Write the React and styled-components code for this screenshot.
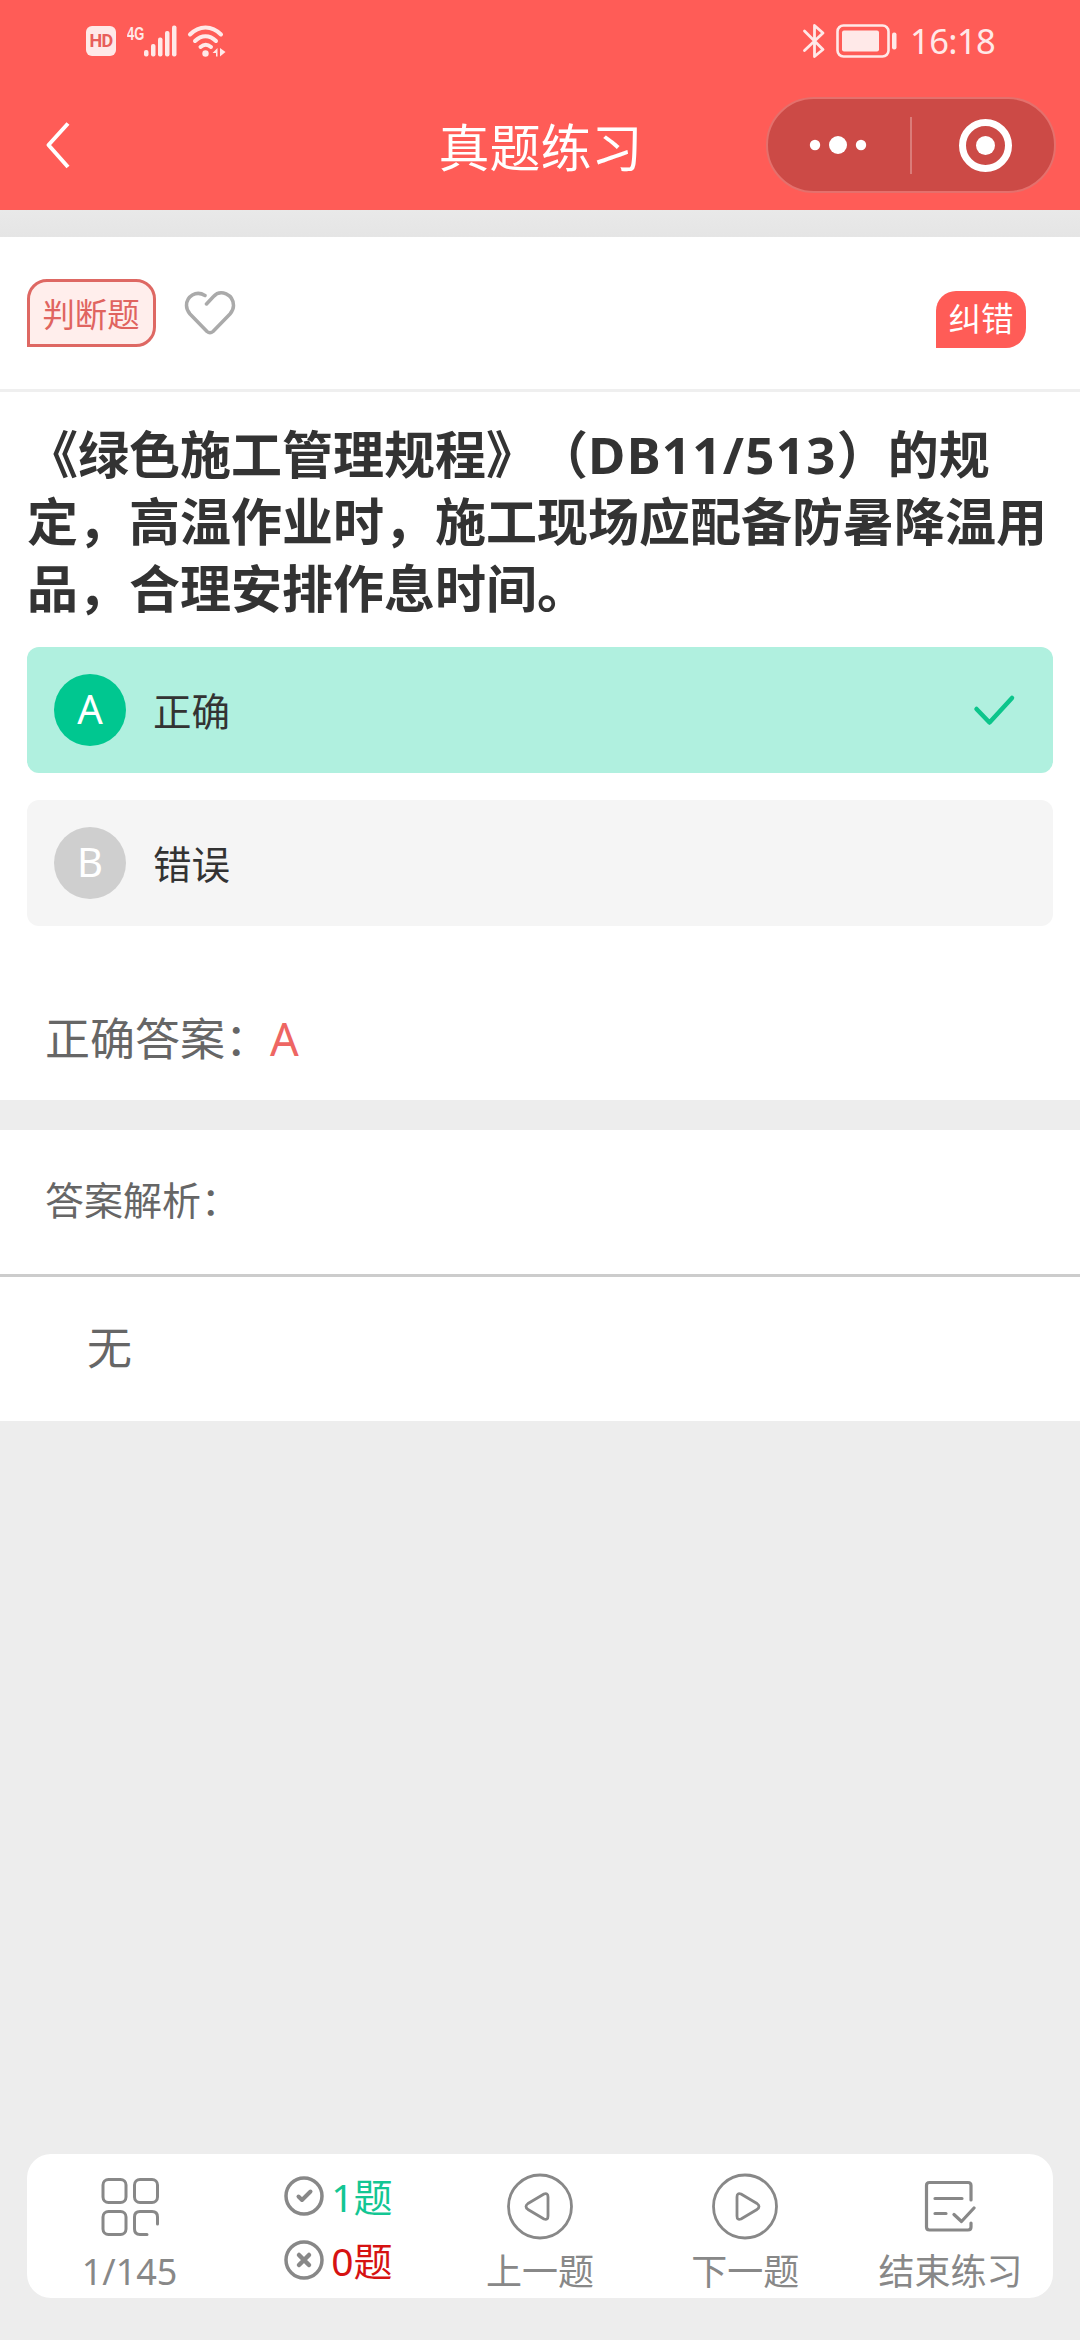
import styled, { createGlobalStyle } from 'styled-components';

const GlobalStyle = createGlobalStyle`
  * {
    box-sizing: border-box;
  }
  body {
    margin: 0;
    background: #ededed;
    font-family: 'Noto Sans', 'Noto Sans CJK SC', sans-serif;
    text-spacing-trim: space-all;
  }
`;

const Page = styled.div`
  width: 1080px;
  height: 2340px;
  display: flex;
  flex-direction: column;
  background: #ededed;
  overflow: hidden;
`;

const Header = styled.header`
  height: 210px;
  background: #ff5c57;
  color: #fff;
`;

const StatusBar = styled.div`
  height: 81px;
  padding: 0 86px;
  display: flex;
  align-items: center;
  justify-content: space-between;
  color: #ffe9e8;
`;

const StatusGroup = styled.div`
  display: flex;
  align-items: center;
  gap: ${({ $gap }) => $gap}px;
`;

const HdBadge = styled.span`
  width: 30px;
  height: 30px;
  margin-right: 2px;
  border-radius: 6px;
  background: #ffe9e8;
  color: #e85f5b;
  font: 700 18px/30px Roboto, sans-serif;
  letter-spacing: -0.8px;
  text-align: center;
`;

const NetworkType = styled.span`
  width: 17px;
  height: 32px;
  margin-right: -9px;
  font: 700 19px/18px 'Liberation Sans', sans-serif;

  span {
    display: block;
    transform: scaleX(0.68);
    transform-origin: left;
  }
`;

const Clock = styled.span`
  width: 84px;
  margin-left: 2px;
  font-size: 34.5px;
  line-height: 40px;
  letter-spacing: -0.6px;
  white-space: nowrap;
`;

const NavBar = styled.div`
  height: 129px;
  display: grid;
  grid-template-columns: 1fr 204px 1fr;
  align-items: center;
  padding: 0 24px 1px 43px;
`;

const BackButton = styled.button`
  width: 32px;
  height: 52px;
  padding: 0;
  border: none;
  background: none;
`;

const Title = styled.h1`
  margin: 3px 0 0 -9px;
  font-size: 51px;
  line-height: 60px;
  font-weight: 400;
  white-space: nowrap;
`;

const Capsule = styled.div`
  width: 290px;
  height: 96px;
  justify-self: end;
  display: flex;
  align-items: center;
  border: 2px solid #e5706c;
  border-radius: 48px;
  background: #cc4a46;
`;

const Band = styled.div`
  height: 27px;
  background: linear-gradient(#e9e9e9, #e5e5e5);
`;

const Card = styled.section`
  background: #fff;
`;

const TagRow = styled.div`
  height: 155px;
  padding: 42px 54px 0 27px;
  display: flex;
  align-items: flex-start;
  border-bottom: 3px solid #efefef;
`;

const TypeTag = styled.span`
  width: 129px;
  height: 68px;
  padding-right: 1px;
  border: 3px solid #de6863;
  border-radius: 20px 20px 20px 0;
  background: #ffeeec;
  color: #e0645f;
  font-size: 32.4px;
  line-height: 64px;
  text-align: center;
`;

const LikeButton = styled.button`
  height: 46px;
  margin: 11px auto 0 28px;
  padding: 0;
  border: none;
  background: none;
`;

const ReportButton = styled.button`
  width: 90px;
  height: 57px;
  margin-top: 12px;
  padding: 0 0 2px;
  border: none;
  border-radius: 20px 20px 20px 0;
  background: #ff5c57;
  color: #fff;
  font: inherit;
  font-size: 32.5px;
  line-height: 52px;
`;

const Question = styled.h2`
  margin: 0;
  padding: 29px 27px 25px;
  color: #333;
  font-size: 51px;
  line-height: 67px;
  font-weight: 700;
`;

const Code = styled.span`
  letter-spacing: 1.3px;
`;

const Options = styled.div`
  padding: 0 27px;
  display: flex;
  flex-direction: column;
  gap: 27px;
`;

const Option = styled.div`
  height: 126px;
  padding: 0 36px 0 27px;
  display: flex;
  align-items: center;
  border-radius: 12px;
  background: ${({ $correct }) => ($correct ? '#b0f0df' : '#f5f5f5')};
  color: #333;
`;

const OptionLetter = styled.span`
  width: 72px;
  height: 72px;
  border-radius: 50%;
  background: ${({ $correct }) => ($correct ? '#00c790' : '#cfcfcf')};
  color: #fff;
  font-size: 40px;
  line-height: 70px;
  text-align: center;
`;

const OptionText = styled.span`
  flex: 1;
  margin-left: 27px;
  padding-top: 2px;
  font-size: 38.5px;
  line-height: 60px;
`;

const Answer = styled.p`
  margin: 0;
  height: 174px;
  padding: 83px 45px 0;
  color: #666;
  font-size: 45px;
  line-height: 60px;

  strong {
    color: #ee6663;
    font-weight: 400;
  }
`;

const AnalysisCard = styled(Card)`
  margin-top: 30px;
`;

const AnalysisTitle = styled.h3`
  margin: 0;
  height: 147px;
  padding: 0 45px;
  border-bottom: 3px solid #ccc;
  color: #666;
  font-size: 39px;
  line-height: 140px;
  font-weight: 400;
`;

const AnalysisText = styled.p`
  margin: 0;
  height: 144px;
  padding: 0 87px;
  color: #666;
  font-size: 45px;
  line-height: 142px;
`;

const Toolbar = styled.nav`
  height: 144px;
  margin: auto 27px 42px;
  display: grid;
  grid-template-columns: repeat(5, 1fr);
  border-radius: 24px;
  background: #fff;
  color: #888;
`;

const ToolButton = styled.button`
  height: 144px;
  padding: 18px 0 0;
  display: flex;
  flex-direction: column;
  align-items: center;
  border: none;
  background: none;
  color: inherit;
  font: inherit;
  font-size: 36px;
  line-height: 40px;
  white-space: nowrap;

  svg {
    flex: none;
    margin-bottom: 10px;
  }
`;

const Score = styled.div`
  padding: 12px 0 0 51px;
`;

const ScoreRow = styled.div`
  height: 64px;
  display: flex;
  align-items: flex-start;
  gap: 6px;
  color: ${({ $color }) => $color};
  font-size: 39px;
  line-height: 62px;
  white-space: nowrap;

  svg {
    margin-top: 9px;
    color: #888;
  }
`;

const SignalIcon = () => (
  <svg width="34" height="32" fill="currentColor">
    <rect x="0" y="25" width="4.5" height="6.5" rx="2" />
    <rect x="7" y="19" width="4.5" height="12.5" rx="2" />
    <rect x="14" y="12.5" width="4.5" height="19" rx="2" />
    <rect x="21" y="6" width="4.5" height="25.5" rx="2" />
    <rect x="28" y="0.5" width="4.5" height="31" rx="2" />
  </svg>
);

const WifiIcon = () => (
  <svg width="40" height="34" fill="none" stroke="currentColor" strokeWidth="4" strokeLinecap="round">
    <path d="M3 10.5C12 1 25 1 34 10.5M8 17C14.5 10.5 22.5 10.5 29 17M13.5 23C17 20 20.5 20 24 23" />
    <circle cx="18.5" cy="29.5" r="3.2" fill="currentColor" stroke="none" />
    <path d="M30.5 24v8.5h-1.5v-3.5h-3.5zM33 24v8.5l5.5-4.5z" fill="currentColor" stroke="none" />
  </svg>
);

const BluetoothIcon = () => (
  <svg width="24" height="36" fill="none" stroke="currentColor" strokeWidth="2.8" strokeLinecap="round" strokeLinejoin="round">
    <path d="M3.5 8L22 26.5 13.5 33.5V2.5L22 10 3.5 27.5" />
  </svg>
);

const BatteryIcon = () => (
  <svg width="61" height="34" fill="none">
    <rect x="1.5" y="1.5" width="51" height="31" rx="6" stroke="currentColor" strokeWidth="2.6" />
    <rect x="6" y="6.5" width="37" height="21" rx="2" fill="currentColor" />
    <rect x="56" y="8.5" width="4.5" height="17" rx="2" fill="currentColor" />
  </svg>
);

const BackIcon = () => (
  <svg width="32" height="52" fill="none" stroke="#fff" strokeWidth="4" strokeLinejoin="round">
    <path d="M25 4.5L5.5 26 25 48" />
  </svg>
);

const CapsuleIcon = () => (
  <svg width="286" height="92" fill="#fff">
    <circle cx="47" cy="46" r="5.2" />
    <circle cx="70" cy="46" r="9" />
    <circle cx="93" cy="46" r="5.2" />
    <rect x="142" y="18" width="2" height="57" opacity="0.28" />
    <circle cx="217.5" cy="46.5" r="23" fill="none" stroke="#fff" strokeWidth="7" />
    <circle cx="217.5" cy="46.5" r="9.5" />
  </svg>
);

const HeartIcon = () => (
  <svg width="52" height="46" fill="none" stroke="#aaa" strokeWidth="3.5" strokeLinecap="round" strokeLinejoin="round">
    <path d="M21 5.5C12 0 2.5 6.5 2.5 15.5Q2.5 20 6 24L23 41.5Q26 44 29 41.5L46 24Q49.5 20 49.5 15.5C49.5 4.5 36.5 -1.5 29.5 6.5L22.5 14" />
  </svg>
);

const CheckIcon = () => (
  <svg width="46" height="40" fill="none" stroke="#0cc58b" strokeWidth="4.5" strokeLinecap="round" strokeLinejoin="round">
    <path d="M5.5 19L18.5 32.5 41 8" />
  </svg>
);

const GridIcon = () => (
  <svg width="58" height="70" fill="none" stroke="currentColor" strokeWidth="3" strokeLinecap="round">
    <rect x="2" y="7.5" width="23" height="23" rx="5.5" />
    <rect x="33.5" y="7.5" width="23" height="23" rx="5.5" />
    <rect x="2" y="39.5" width="23" height="23" rx="5.5" />
    <path d="M46 62.5H39Q33.5 62.5 33.5 57V45Q33.5 39.5 39 39.5H51Q56.5 39.5 56.5 45V52" />
  </svg>
);

const ScoreIcon = ({ correct }) => (
  <svg width="42" height="42" fill="none" stroke="currentColor" strokeWidth="3.5" strokeLinecap="round" strokeLinejoin="round">
    <circle cx="21" cy="21" r="18" />
    {correct ? (
      <path d="M15.5 21.5L19 25 27.5 16.5" strokeWidth="4" />
    ) : (
      <path d="M16 16L26 26M26 16L16 26" strokeWidth="4.5" />
    )}
  </svg>
);

const ArrowIcon = ({ back }) => (
  <svg width="70" height="70" fill="none" stroke="currentColor" strokeWidth="2.8" strokeLinejoin="round">
    <circle cx="35" cy="34.5" r="31.5" />
    <path
      d="M27 25Q27 20.5 31 22L47 31.5Q51 34.5 47 37.5L31 47Q27 48.5 27 44Z"
      transform={back ? 'translate(70 0) scale(-1 1)' : undefined}
    />
  </svg>
);

const FinishIcon = () => (
  <svg width="52" height="70" fill="none" stroke="currentColor" strokeWidth="3.2" strokeLinecap="round" strokeLinejoin="round">
    <path d="M47 28V13.5Q47 10.5 44 10.5H5.5Q2.5 10.5 2.5 13.5V55Q2.5 58 5.5 58H44Q47 58 47 55V51" />
    <path d="M11 26.5H38M11 41.5H22M30 42.5L37.5 49.5 50 36" />
  </svg>
);

const options = [
  { letter: 'A', text: '正确', correct: true },
  { letter: 'B', text: '错误', correct: false },
];

const App = () => {
  return (
    <Page>
      <GlobalStyle />
      <Header>
        <StatusBar>
          <StatusGroup $gap={9}>
            <HdBadge>HD</HdBadge>
            <NetworkType>
              <span>4G</span>
            </NetworkType>
            <SignalIcon />
            <WifiIcon />
          </StatusGroup>
          <StatusGroup $gap={11}>
            <BluetoothIcon />
            <BatteryIcon />
            <Clock>16:18</Clock>
          </StatusGroup>
        </StatusBar>
        <NavBar>
          <BackButton>
            <BackIcon />
          </BackButton>
          <Title>真题练习</Title>
          <Capsule>
            <CapsuleIcon />
          </Capsule>
        </NavBar>
      </Header>
      <Band />
      <Card>
        <TagRow>
          <TypeTag>判断题</TypeTag>
          <LikeButton>
            <HeartIcon />
          </LikeButton>
          <ReportButton>纠错</ReportButton>
        </TagRow>
        <Question>
          《绿色施工管理规程》（<Code>DB11/513</Code>）的规定，高温作业时，施工现场应配备防暑降温用品，合理安排作息时间。
        </Question>
        <Options>
          {options.map(({ letter, text, correct }) => (
            <Option key={letter} $correct={correct}>
              <OptionLetter $correct={correct}>{letter}</OptionLetter>
              <OptionText>{text}</OptionText>
              {correct && <CheckIcon />}
            </Option>
          ))}
        </Options>
        <Answer>
          正确答案：<strong>A</strong>
        </Answer>
      </Card>
      <AnalysisCard>
        <AnalysisTitle>答案解析：</AnalysisTitle>
        <AnalysisText>无</AnalysisText>
      </AnalysisCard>
      <Toolbar>
        <ToolButton>
          <GridIcon />
          1/145
        </ToolButton>
        <Score>
          <ScoreRow $color="#13c693">
            <ScoreIcon correct />
            1题
          </ScoreRow>
          <ScoreRow $color="#d61212">
            <ScoreIcon />
            0题
          </ScoreRow>
        </Score>
        <ToolButton>
          <ArrowIcon back />
          上一题
        </ToolButton>
        <ToolButton>
          <ArrowIcon />
          下一题
        </ToolButton>
        <ToolButton>
          <FinishIcon />
          结束练习
        </ToolButton>
      </Toolbar>
    </Page>
  );
};

export default App;
